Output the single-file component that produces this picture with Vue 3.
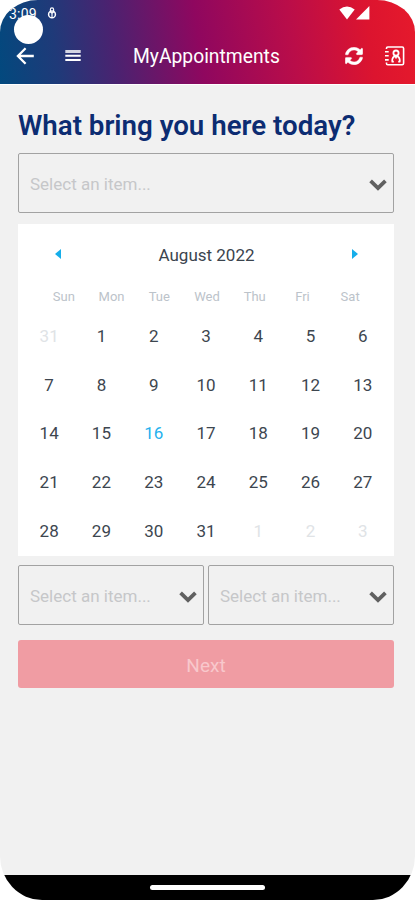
<script setup>
const weekdays = ['Sun', 'Mon', 'Tue', 'Wed', 'Thu', 'Fri', 'Sat']
const days = Array.from({ length: 35 }, (_, i) => {
  const n = i === 0 ? 31 : i > 31 ? i - 31 : i
  return { id: i, n, muted: i === 0 || i > 31, today: i === 16 }
})
</script>

<template>
  <div class="phone">
    <header class="top">
      <div class="status">
        <span class="time">3:09</span>
        <svg class="mic" width="10" height="13" viewBox="0 0 10 13" fill="none" stroke="#fff">
          <rect x="3.4" y="0.8" width="3.2" height="5" rx="1.6" stroke-width="1.2" />
          <circle cx="5" cy="7.4" r="3.4" stroke-width="1.5" />
          <path d="M5 5v5" stroke-width="1.2" />
        </svg>
        <svg class="signal" width="32" height="14" viewBox="0 0 32 14" fill="#fff">
          <path d="M0.3 3.6Q8 -2.6 15.7 3.6L8 13.6Z" />
          <path d="M30.4 0v13.4H17Z" />
        </svg>
        <span class="camera"></span>
      </div>
      <div class="bar">
        <svg class="back" width="18" height="18" viewBox="0 0 18 18" fill="none" stroke="#fff" stroke-width="2.3">
          <path d="M9.6 1.2L1.9 9l7.7 7.8M2 9h15.8" />
        </svg>
        <svg class="menu" width="16" height="12" viewBox="0 0 16 12" fill="#fff">
          <path d="M0.3 0h15.4v3H0.3z" opacity="0.8" />
          <path d="M0.3 4.8h15.4v1.9H0.3zM0.3 9h15.4v1.9H0.3z" />
        </svg>
        <h1>MyAppointments</h1>
        <svg class="sync" width="18" height="18" viewBox="0 0 512 512" fill="#fff" stroke="#fff" stroke-width="12">
          <path d="M371 133c-32-30-73-46-116-46-78 0-145 53-163 127-1 5-6 9-12 9H23c-8 0-13-7-12-14C32 94 134 8 256 8c67 0 127 26 172 69l35-35c15-15 41-4 41 17v134c0 13-11 24-24 24H346c-22 0-32-26-17-41zM32 296h134c22 0 32 26 17 41l-42 42c32 30 73 46 116 46 78 0 145-53 163-127 1-5 6-9 12-9h57c8 0 13 7 12 14-21 115-123 201-245 201-67 0-127-26-172-69l-35 35C34 485 8 474 8 453V320c0-13 11-24 24-24z" />
        </svg>
        <svg class="contacts" width="20" height="20" viewBox="0 0 20 20" fill="none" stroke="#fff">
          <path d="M4 1h13.2a1.4 1.4 0 0 1 1.4 1.4v14.9a1.4 1.4 0 0 1-1.4 1.4H2.8a1.3 1.3 0 0 1-1.3-1.3v-.8" stroke-width="1.6" />
          <path d="M1.5 3V2.3A1.3 1.3 0 0 1 2.8 1H4M0 5.7h3.7M0 9.8h3.7M0 13.9h3.7" stroke-width="1.6" />
          <circle cx="11" cy="7.1" r="2.6" stroke-width="1.8" />
          <path d="M6.6 15.6h2.2M13.2 15.6h2.2M7.1 15.6c0-3.5 1.3-5.4 3.9-5.4s3.9 1.9 3.9 5.4M11 10.6v2" stroke-width="1.7" />
        </svg>
      </div>
    </header>

    <main>
      <h2>What bring you here today?</h2>
      <div class="select">
        <span>Select an item...</span>
        <svg width="18" height="12" viewBox="0 0 18 12" fill="none" stroke="#606060" stroke-width="3.8"><path d="M1.6 1.8L9 9l7.4-7.2" /></svg>
      </div>

      <section class="calendar">
        <div class="month">
          <svg width="6" height="10" viewBox="0 0 6 10" fill="#16aeea"><path d="M6 0v10L0 5z" /></svg>
          <span>August 2022</span>
          <svg width="6" height="10" viewBox="0 0 6 10" fill="#16aeea"><path d="M0 0v10l6-5z" /></svg>
        </div>
        <div class="week"><span v-for="w in weekdays" :key="w">{{ w }}</span></div>
        <div class="days">
          <span v-for="d in days" :key="d.id" :class="{ muted: d.muted, today: d.today }">{{ d.n }}</span>
        </div>
      </section>

      <div class="pair">
        <div v-for="i in 2" :key="i" class="select">
          <span>Select an item...</span>
          <svg width="18" height="12" viewBox="0 0 18 12" fill="none" stroke="#606060" stroke-width="3.8"><path d="M1.6 1.8L9 9l7.4-7.2" /></svg>
        </div>
      </div>
      <button class="next" disabled>Next</button>
    </main>

    <footer><span></span></footer>
  </div>
</template>

<style>
body { background: #fff; }
</style>

<style scoped>
.phone {
  box-sizing: border-box;
  width: 415px;
  height: 900px;
  display: flex;
  flex-direction: column;
  overflow: hidden;
  font-family: Roboto, "Liberation Sans", sans-serif;
  background: #f1f1f1;
  border-radius: 38px 38px 42px 42px / 32px 32px 44px 44px;
}
.top {
  height: 84px;
  flex: none;
  background: linear-gradient(82deg, #02497e 0%, #1f3a79 14%, #4b2270 28%, #8f075f 48%, #ba0d49 70%, #dc142f 88%, #e61a2c 100%);
  border-bottom: 1px solid #fff;
}
.status {
  position: relative;
  display: flex;
  height: 27px;
  padding: 6px 44px 0 9px;
  box-sizing: border-box;
}
.time { font-size: 14px; line-height: 16px; width: 29px; color: #fff; letter-spacing: 0.2px; }
.mic { margin: 1px 0 0 9px; }
.signal { margin-left: auto; }
.camera {
  position: absolute;
  left: 14px;
  top: 15px;
  width: 29px;
  height: 29px;
  border-radius: 50%;
  background: #fff;
}
.bar {
  display: flex;
  align-items: center;
  height: 57px;
  padding: 0 10px 0 16px;
}
.menu { margin-left: 31px; }
h1 {
  width: 148px;
  margin: 2px 0 0 52px;
  color: #fff;
  font-size: 19.3px;
  font-weight: 400;
  white-space: nowrap;
}
.sync { margin-left: auto; }
.contacts { margin-left: 22px; }
main { flex: 1; padding: 0 21px 0 18px; }
h2 {
  margin: 23px 0 0;
  height: 45px;
  font-size: 27.7px;
  line-height: 36px;
  font-weight: 600;
  color: #0c2c72;
  white-space: nowrap;
}
.select {
  display: flex;
  align-items: center;
  justify-content: space-between;
  box-sizing: border-box;
  height: 60px;
  padding: 0 6px 0 11px;
  border: 1.5px solid #a2a2a2;
  border-radius: 2px;
  color: #c6c7c9;
  font-size: 17px;
  white-space: nowrap;
}
.select span { padding-top: 2px; }
.select svg { margin-top: 4px; }
.calendar {
  box-sizing: border-box;
  height: 332px;
  margin-top: 11px;
  padding: 19px 5px 0;
  background: #fff;
}
.month {
  display: flex;
  align-items: center;
  justify-content: space-between;
  height: 24px;
  padding: 0 31px 0 32px;
  font-size: 17px;
  color: #3b444e;
}
.month svg { margin-bottom: 2px; }
.week {
  display: grid;
  grid-template-columns: repeat(7, 1fr);
  padding: 0 15px 0 17px;
  margin-top: 21px;
  line-height: 18px;
  font-size: 13px;
  text-align: center;
  color: #bcc3ca;
}
.days {
  display: grid;
  grid-template-columns: repeat(7, 1fr);
  grid-auto-rows: 48.7px;
  margin-top: 5px;
  line-height: 50px;
  font-size: 17px;
  text-align: center;
  color: #3d464f;
}
.muted { color: #e0e3e6; }
.today { color: #25b1ee; }
.pair {
  display: grid;
  grid-template-columns: 1fr 1fr;
  gap: 4px;
  margin-top: 9px;
}
.next {
  display: block;
  width: 100%;
  height: 48px;
  margin-top: 15px;
  padding: 2px 0 0;
  border: 0;
  border-radius: 3px;
  background: #f09ca3;
  color: #f8c8cc;
  font: 400 19px Roboto, sans-serif;
}
footer {
  height: 25px;
  flex: none;
  display: flex;
  align-items: center;
  justify-content: center;
  background: #000;
}
footer span { width: 115px; height: 5px; border-radius: 3px; background: #fff; }
</style>
